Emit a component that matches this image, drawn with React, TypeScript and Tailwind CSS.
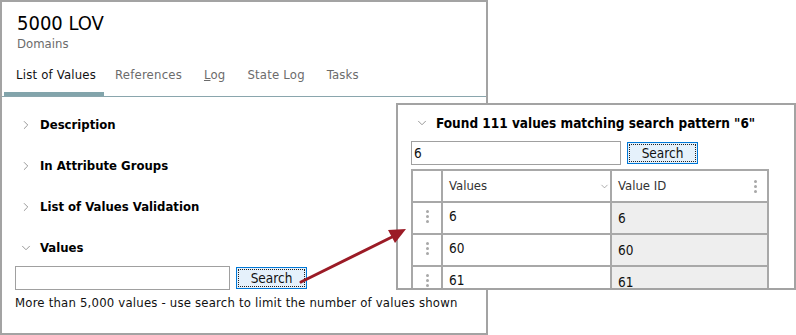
import { ChevronDown, ChevronRight } from "lucide-react";

const FONT = "font-['Tahoma','DejaVu_Sans_Condensed','Liberation_Sans',sans-serif]";

const TABS = ["List of Values", "References", "Log", "State Log", "Tasks"];
const SECTIONS = ["Description", "In Attribute Groups", "List of Values Validation"];
const ROWS = ["6", "60", "61"];

function Dots() {
  return (
    <div className="flex flex-col items-center gap-[2px]">
      <span className="w-[3px] h-[3px] rounded-full bg-[#a8a8a8]" />
      <span className="w-[3px] h-[3px] rounded-full bg-[#a8a8a8]" />
      <span className="w-[3px] h-[3px] rounded-full bg-[#a8a8a8]" />
    </div>
  );
}

function SearchButton() {
  return (
    <button className="h-[22px] w-[71px] border border-[#0078d7] bg-[#e5f1fb] text-[13.5px] text-[#111] p-[1px]">
      <span className="flex h-full w-full items-center justify-center border border-dotted border-[#222]">
        Search
      </span>
    </button>
  );
}

export default function App() {
  return (
    <div className={`relative w-[796px] h-[335px] bg-white text-[#111] ${FONT}`}>
      {/* Main panel */}
      <div className="w-[488px] h-[335px] border-2 border-[#a3a3a3] flex flex-col">
        <div className="pl-[15px] pt-[8px]">
          <div className="text-[20px] leading-[26px] text-black">5000 LOV</div>
          <div className="text-[13px] leading-[16px] text-[#6b6b6b]">Domains</div>
        </div>

        {/* Tabs */}
        <div className="mt-[15px] flex border-b border-[#8aa6ad] pl-[2px]">
          {TABS.map((t, i) => (
            <div
              key={t}
              className={`pb-[9px] text-[13px] leading-[16px] tracking-[0.2px] border-b-4 ${
                i === 0 ? "border-[#82a4ab] text-[#111] pl-[12px] pr-[8px]" : "border-transparent text-[#6b6b6b] px-[11px]"
              }`}
            >
              {t === "Log" ? (
                <>
                  <span className="underline">L</span>og
                </>
              ) : (
                t
              )}
            </div>
          ))}
        </div>

        {/* Sections */}
        <div className="pl-[17px] pt-[7px] flex flex-col">
          {SECTIONS.map((s) => (
            <div key={s} className="flex items-center h-[41px]">
              <ChevronRight size={14} strokeWidth={1.5} className="text-[#8a8a8a] mr-[7px]" />
              <span className="text-[13px] font-bold text-black">{s}</span>
            </div>
          ))}
          <div className="flex items-center h-[41px]">
            <ChevronDown size={14} strokeWidth={1.5} className="text-[#8a8a8a] mr-[7px]" />
            <span className="text-[13px] font-bold text-black">Values</span>
          </div>
        </div>
        <div className="pl-[13px] flex items-center gap-[6px] -mt-[2px]">
          <input className="w-[215px] h-[24px] border border-[#a0a0a0] outline-none" />
          <SearchButton />
        </div>
        <div className="pl-[13px] mt-[5px] text-[13px] leading-[16px] tracking-[0.2px] text-[#111]">
          More than 5,000 values - use search to limit the number of values shown
        </div>
      </div>

      {/* Search results overlay */}
      <div className="absolute left-[396px] top-[103px] w-[400px] h-[187px] border-2 border-[#a3a3a3] bg-white overflow-hidden">
        <div className="flex items-center pl-[17px] pt-[8px] h-[28px]">
          <ChevronDown size={14} strokeWidth={1.5} className="text-[#8a8a8a] mr-[7px]" />
          <span className="text-[13.5px] font-bold text-black">Found 111 values matching search pattern "6"</span>
        </div>
        <div className="flex items-center gap-[6px] pl-[13px] mt-[8px]">
          <input
            defaultValue="6"
            className="w-[210px] h-[24px] border border-[#a0a0a0] px-[2px] text-[13.5px] outline-none"
          />
          <SearchButton />
        </div>
        <div className="ml-[13px] mt-[4px] w-[358px] border-l-2 border-r-2 border-t-2 border-[#a8a8a8]">
          <div className="grid grid-cols-[30px_169px_155px] h-[32px] border-b-2 border-[#a8a8a8]">
            <div className="border-r-2 border-[#a8a8a8]" />
            <div className="border-r-2 border-[#a8a8a8] flex items-center justify-between pl-[6px] pr-[0px] text-[13px] text-[#333]">
              Values
              <ChevronDown size={11} strokeWidth={1.5} className="text-[#888]" />
            </div>
            <div className="flex items-center justify-between pl-[6px] pr-[10px] text-[13px] text-[#333]">
              Value ID
              <Dots />
            </div>
          </div>
          {ROWS.map((r) => (
            <div key={r} className="grid grid-cols-[30px_169px_155px] h-[32px] border-b-2 border-[#a8a8a8]">
              <div className="border-r-2 border-[#a8a8a8] flex items-center justify-center pb-[4px]">
                <Dots />
              </div>
              <div className="border-r-2 border-[#a8a8a8] flex items-center pl-[6px] pb-[4px] text-[13.5px]">{r}</div>
              <div className="bg-[#eeeeee] flex items-center pl-[6px] text-[13.5px]">{r}</div>
            </div>
          ))}
        </div>
      </div>

      {/* Arrow */}
      <svg className="absolute left-0 top-0 pointer-events-none" width="796" height="335">
        <line x1="301" y1="282" x2="392" y2="237" stroke="#9b1b26" strokeWidth="3" strokeLinecap="round" />
        <polygon points="406,229 388,230 395,243" fill="#9b1b26" />
      </svg>
    </div>
  );
}
